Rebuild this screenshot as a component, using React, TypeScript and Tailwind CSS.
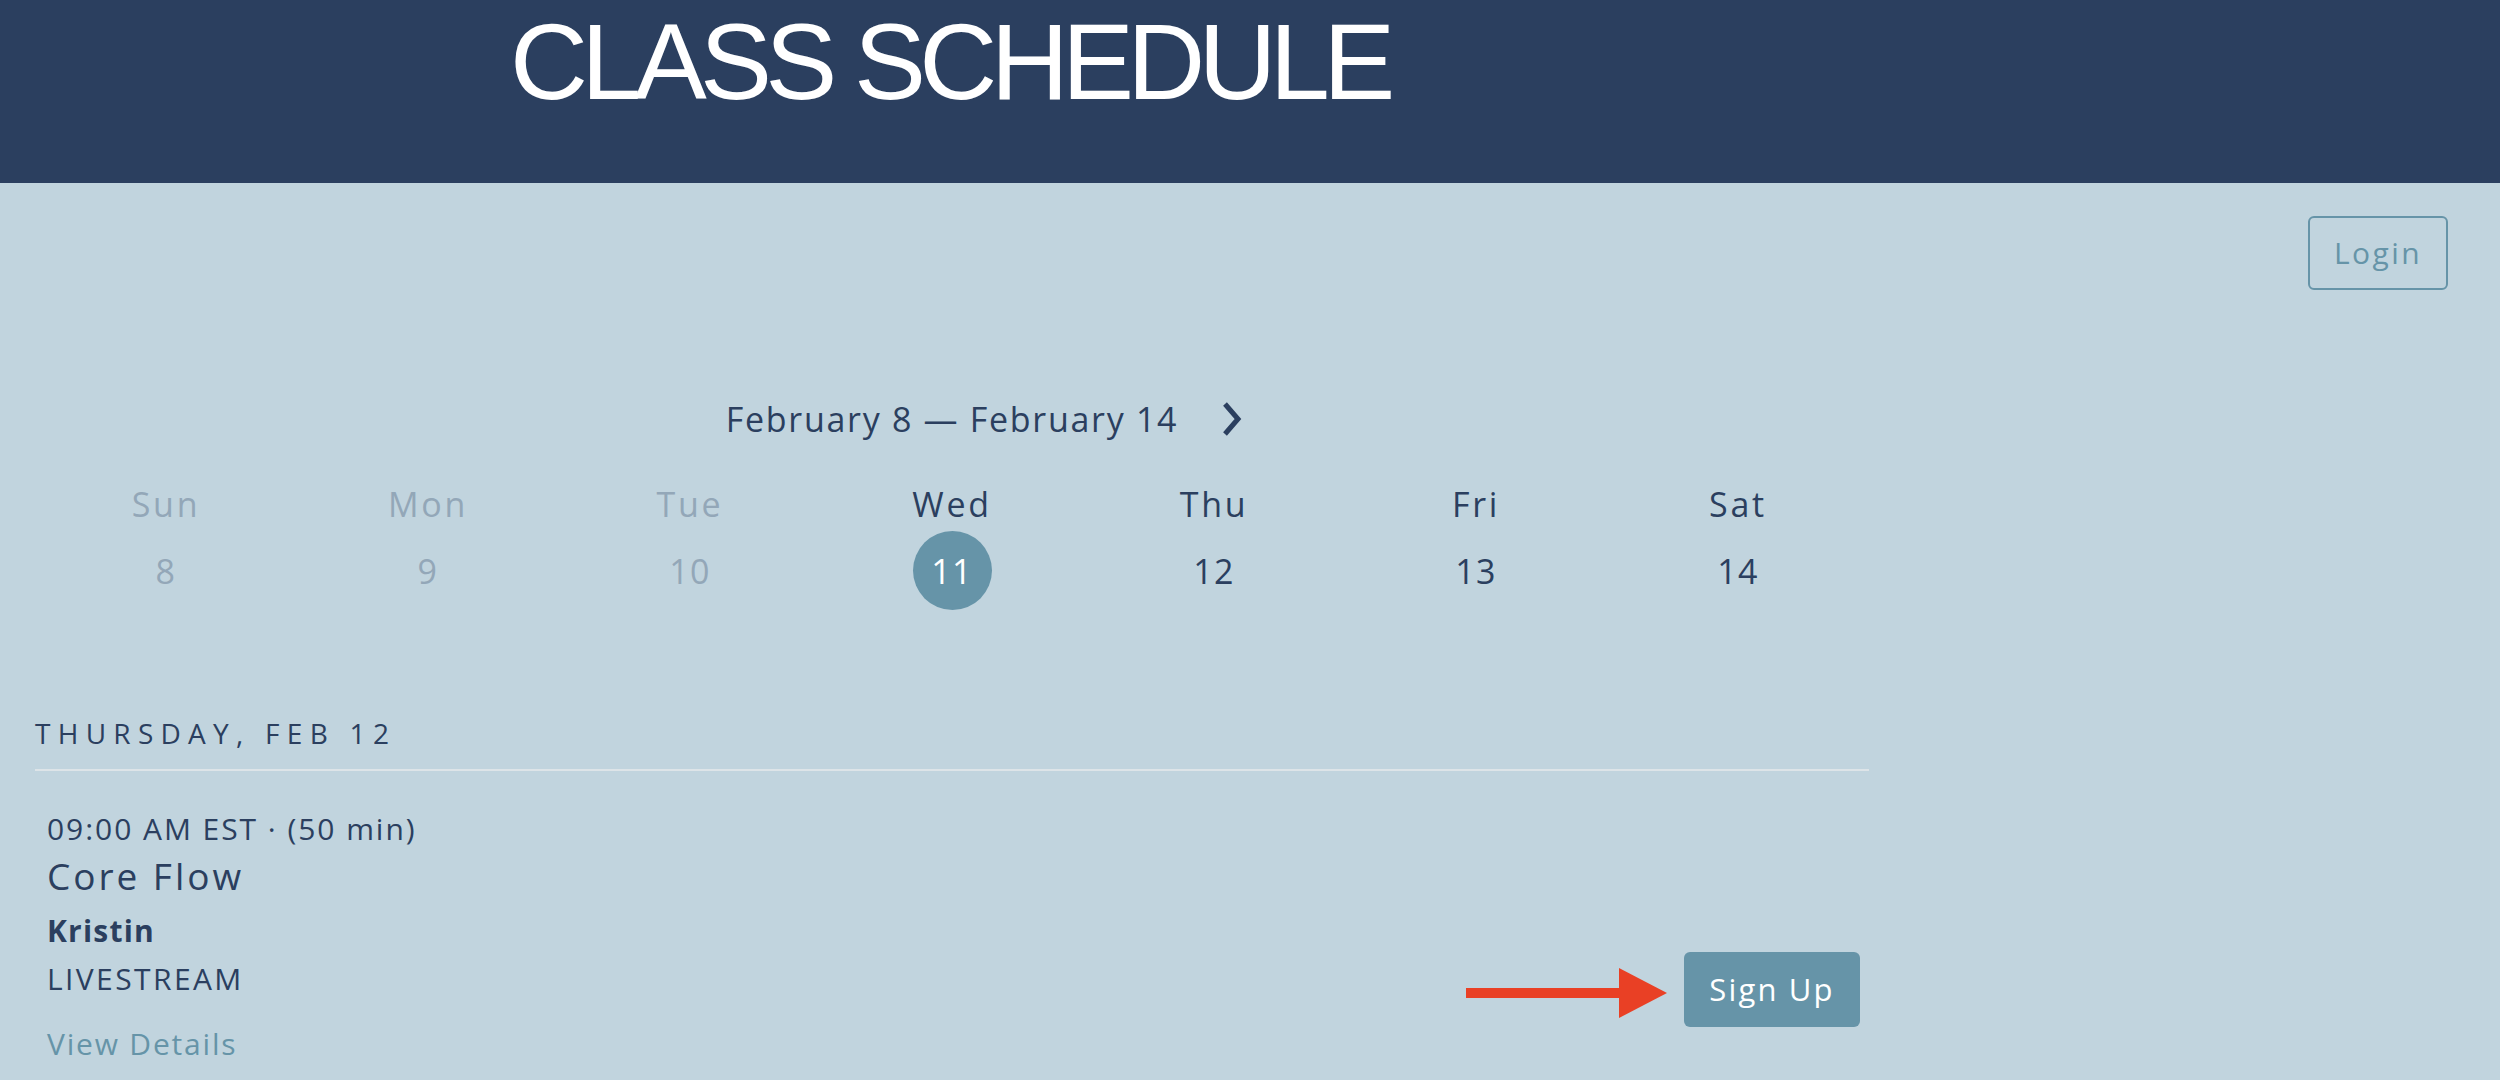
import React from 'react'

const days = [
  { name: 'Sun', num: 8, past: true },
  { name: 'Mon', num: 9, past: true },
  { name: 'Tue', num: 10, past: true },
  { name: 'Wed', num: 11, active: true },
  { name: 'Thu', num: 12 },
  { name: 'Fri', num: 13 },
  { name: 'Sat', num: 14 },
]

function ChevronRight() {
  return (
    <svg width="20" height="36" viewBox="0 0 20 36" fill="none">
      <path d="M3 3 L16 18 L3 33" stroke="#2b3f5f" strokeWidth="5" strokeLinecap="butt" strokeLinejoin="miter" />
    </svg>
  )
}

function RedArrow() {
  return (
    <svg width="201" height="50" viewBox="0 0 201 50" className="absolute left-[-218px] top-[16px]">
      <rect x="0" y="20" width="154" height="10" fill="#e94025" />
      <polygon points="153,0 201,25 153,50" fill="#e94025" />
    </svg>
  )
}

export default function App() {
  return (
    <div className="min-h-screen bg-[#c1d4de] font-['Open_Sans',sans-serif]">
      {/* Cabeçalho */}
      <header className="h-[183px] bg-[#2b3f5f] pl-[510px] pt-[8px]">
        <h1 className="font-['Liberation_Sans',Arial,sans-serif] text-[108px] leading-none tracking-[-0.062em] text-white">
          CLASS SCHEDULE
        </h1>
      </header>

      <div className="flex justify-end pr-[52px] pt-[33px]">
        <button className="h-[74px] w-[140px] rounded-[6px] border-2 border-[#6694a8] text-[30px] leading-none tracking-[0.08em] text-[#6694a8]">
          Login
        </button>
      </div>

      <main className="ml-[35px] w-[1834px]">
        {/* Semana */}
        <div className="mt-[105px] grid grid-cols-[1fr_auto_1fr] items-center">
          <div />
          <div className="text-[34px] leading-[48px] tracking-[0.05em] text-[#2b3f5f]">February 8 — February 14</div>
          <div className="flex pl-[44px]">
            <ChevronRight />
          </div>
        </div>

        <div className="mt-[37px] grid grid-cols-7">
          {days.map((d) => (
            <div key={d.name} className="flex flex-col items-center">
              <div className={`text-[34px] leading-[48px] tracking-[0.08em] ${d.past ? 'text-[#93a7b8]' : 'text-[#2b3f5f]'}`}>
                {d.name}
              </div>
              <div
                className={`mt-[3px] flex h-[79px] w-[79px] items-center justify-center rounded-full text-[34px] leading-[48px] tracking-[0.04em] ${
                  d.active ? 'bg-[#6694a8] text-white' : d.past ? 'text-[#93a7b8]' : 'text-[#2b3f5f]'
                }`}
              >
                {d.num}
              </div>
            </div>
          ))}
        </div>

        {/* Dia */}
        <div className="mt-[103px] text-[28px] leading-[40px] tracking-[0.26em] text-[#2b3f5f]">THURSDAY, FEB 12</div>
        <div className="mt-[16px] h-[2px] bg-[#dde4e8]" />

        {/* Aula */}
        <div className="flex justify-between pl-[12px] pr-[9px]">
          <div className="mt-[38px] flex flex-col text-[#2b3f5f]">
            <div className="text-[30px] leading-[40px] tracking-[0.065em]">09:00 AM EST · (50 min)</div>
            <div className="mt-[5px] text-[37px] leading-[44px] tracking-[0.08em]">Core Flow</div>
            <div className="mt-[13px] text-[30px] font-bold leading-[40px] tracking-[0.04em]">Kristin</div>
            <div className="mt-[8px] text-[30px] leading-[40px] tracking-[0.08em]">LIVESTREAM</div>
            <div className="mt-[25px] text-[30px] leading-[40px] tracking-[0.06em] text-[#6694a8]">View Details</div>
          </div>
          <div className="relative mt-[181px] self-start">
            <RedArrow />
            <button className="h-[75px] w-[176px] rounded-[6px] bg-[#6694a8] text-[31px] leading-none tracking-[0.07em] text-white">
              Sign Up
            </button>
          </div>
        </div>
      </main>
    </div>
  )
}
